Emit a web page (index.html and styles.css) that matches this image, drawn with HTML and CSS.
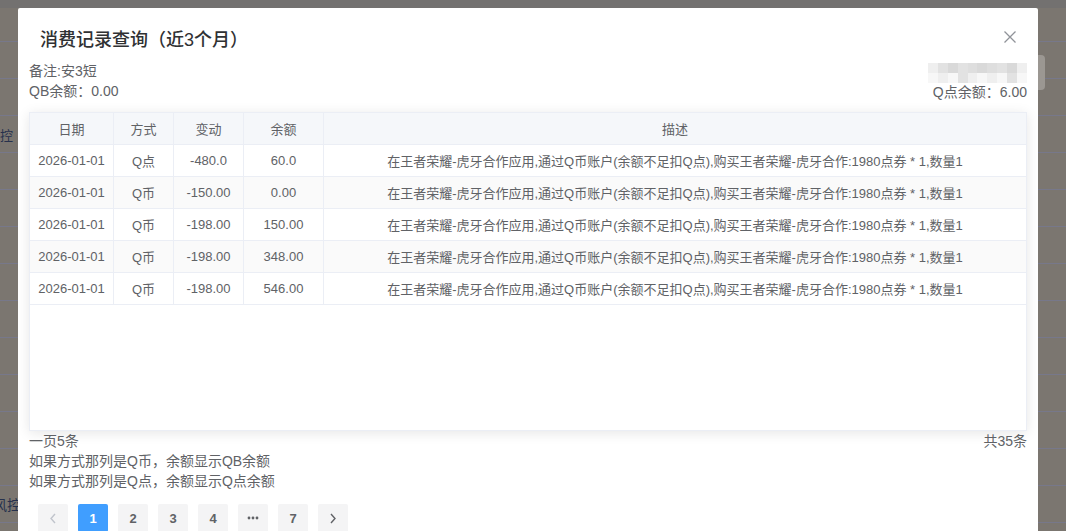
FILE: index.html
```html
<!DOCTYPE html>
<html lang="zh">
<head>
<meta charset="utf-8">
<title>消费记录查询</title>
<link rel="stylesheet" href="styles.css">
</head>
<body>
<div class="page">
  <div class="bg">
    <div class="bg-strip"></div>
    <div class="bg-rows">
      <div class="bg-row"></div>
      <div class="bg-row"></div>
      <div class="bg-row"></div>
      <div class="bg-row"><span class="bg-text t1">控</span></div>
      <div class="bg-row"></div>
      <div class="bg-row"></div>
      <div class="bg-row"></div>
      <div class="bg-row"></div>
      <div class="bg-row"></div>
      <div class="bg-row"></div>
      <div class="bg-row"></div>
      <div class="bg-row"></div>
      <div class="bg-row"></div>
      <div class="bg-row"><span class="bg-text t2">风控</span></div>
      <div class="bg-row"></div>
    </div>
  </div>
  <div class="side-tab"></div>

  <div class="dialog">
    <div class="dialog-header">
      <span class="dialog-title">消费记录查询（近3个月）</span>
      <svg class="close" width="12" height="12" viewBox="0 0 12 12"><path d="M0.5 0.5 L11.5 11.5 M11.5 0.5 L0.5 11.5" stroke="#909399" stroke-width="1.3" fill="none"/></svg>
    </div>
    <div class="dialog-body">
      <div class="info">
        <div class="info-left">
          <div class="line">备注:安3短</div>
          <div class="line">QB余额：0.00</div>
        </div>
        <div class="info-right">
          <div class="mosaic">
            <i class="c a"></i><i class="c b"></i><i class="c c2"></i><i class="c b"></i><i class="c d"></i><i class="c c2"></i><i class="c d"></i><i class="c b"></i><i class="c c2"></i><i class="c a"></i>
            <i class="c e"></i><i class="c a"></i><i class="c e"></i><i class="c b"></i><i class="c a"></i><i class="c e"></i><i class="c a"></i><i class="c e"></i><i class="c b"></i><i class="c e"></i>
          </div>
          <div class="line">Q点余额：6.00</div>
        </div>
      </div>

      <div class="table">
        <div class="tr th">
          <div class="td w1">日期</div>
          <div class="td w2">方式</div>
          <div class="td w3">变动</div>
          <div class="td w4">余额</div>
          <div class="td w5">描述</div>
        </div>
        <div class="tr">
          <div class="td w1">2026-01-01</div>
          <div class="td w2">Q点</div>
          <div class="td w3">-480.0</div>
          <div class="td w4">60.0</div>
          <div class="td w5">在王者荣耀-虎牙合作应用,通过Q币账户(余额不足扣Q点),购买王者荣耀-虎牙合作:1980点券 * 1,数量1</div>
        </div>
        <div class="tr striped">
          <div class="td w1">2026-01-01</div>
          <div class="td w2">Q币</div>
          <div class="td w3">-150.00</div>
          <div class="td w4">0.00</div>
          <div class="td w5">在王者荣耀-虎牙合作应用,通过Q币账户(余额不足扣Q点),购买王者荣耀-虎牙合作:1980点券 * 1,数量1</div>
        </div>
        <div class="tr">
          <div class="td w1">2026-01-01</div>
          <div class="td w2">Q币</div>
          <div class="td w3">-198.00</div>
          <div class="td w4">150.00</div>
          <div class="td w5">在王者荣耀-虎牙合作应用,通过Q币账户(余额不足扣Q点),购买王者荣耀-虎牙合作:1980点券 * 1,数量1</div>
        </div>
        <div class="tr striped">
          <div class="td w1">2026-01-01</div>
          <div class="td w2">Q币</div>
          <div class="td w3">-198.00</div>
          <div class="td w4">348.00</div>
          <div class="td w5">在王者荣耀-虎牙合作应用,通过Q币账户(余额不足扣Q点),购买王者荣耀-虎牙合作:1980点券 * 1,数量1</div>
        </div>
        <div class="tr">
          <div class="td w1">2026-01-01</div>
          <div class="td w2">Q币</div>
          <div class="td w3">-198.00</div>
          <div class="td w4">546.00</div>
          <div class="td w5">在王者荣耀-虎牙合作应用,通过Q币账户(余额不足扣Q点),购买王者荣耀-虎牙合作:1980点券 * 1,数量1</div>
        </div>
      </div>

      <div class="foot">
        <div class="line">一页5条</div>
        <div class="line">共35条</div>
      </div>
      <div class="line">如果方式那列是Q币，余额显示QB余额</div>
      <div class="line">如果方式那列是Q点，余额显示Q点余额</div>

      <div class="pager">
        <button class="pbtn disabled"><svg width="8" height="11" viewBox="0 0 8 11"><path d="M6 1 L2 5.5 L6 10" stroke="#c0c4cc" stroke-width="1.4" fill="none"/></svg></button>
        <button class="pbtn active">1</button>
        <button class="pbtn">2</button>
        <button class="pbtn">3</button>
        <button class="pbtn">4</button>
        <button class="pbtn more"><svg width="12" height="4" viewBox="0 0 12 4"><circle cx="2" cy="2" r="1.4" fill="#606266"/><circle cx="6" cy="2" r="1.4" fill="#606266"/><circle cx="10" cy="2" r="1.4" fill="#606266"/></svg></button>
        <button class="pbtn">7</button>
        <button class="pbtn"><svg width="8" height="11" viewBox="0 0 8 11"><path d="M2 1 L6 5.5 L2 10" stroke="#606266" stroke-width="1.4" fill="none"/></svg></button>
      </div>
    </div>
  </div>
</div>
</body>
</html>
```

FILE: styles.css
```css
* { box-sizing: border-box; }
html, body {
  margin: 0;
  padding: 0;
  width: 1066px;
  height: 531px;
  overflow: hidden;
}
body {
  font-family: "Liberation Sans", "Noto Sans CJK SC", sans-serif;
  color: #606266;
}
.page {
  position: relative;
  width: 1066px;
  height: 531px;
  overflow: hidden;
  background: #7b7670;
}
.bg {
  position: absolute;
  left: 0;
  top: 0;
  width: 1066px;
  height: 531px;
}
.bg-strip {
  height: 8px;
  background: #737170;
}
.bg-rows {
  margin-top: -3px;
}
.bg-row {
  height: 37px;
  border-bottom: 1px solid #77788a;
  display: flex;
  align-items: center;
  font-size: 14px;
  color: #26314d;
}
.bg-text { white-space: nowrap; }
.t1 { margin-left: 0; font-size: 13px; }
.t2 { margin-left: -7px; }

.side-tab {
  position: absolute;
  left: 1037px;
  top: 55px;
  width: 8px;
  height: 35px;
  background: #9b9792;
  border-radius: 0 4px 4px 0;
}

.dialog {
  position: absolute;
  left: 18px;
  top: 8px;
  width: 1020px;
  height: 560px;
  background: #fff;
  border-radius: 2px;
}
.dialog-header {
  display: flex;
  justify-content: space-between;
  align-items: center;
  padding: 20px 22px 9px 22px;
  height: 53px;
}
.dialog-title {
  font-size: 18px;
  line-height: 24px;
  color: #303133;
  font-weight: 500;
}
.close {
  margin-top: -7px;
}
.dialog-body {
  padding: 0 11px;
}
.line {
  font-size: 14px;
  line-height: 20px;
  height: 20px;
  color: #606266;
  white-space: nowrap;
}
.info {
  display: flex;
  justify-content: space-between;
  height: 40px;
}
.info-right {
  display: flex;
  flex-direction: column;
  align-items: flex-end;
}
.mosaic {
  margin-top: 2px;
  width: 99px;
  height: 20px;
  display: grid;
  grid-template-columns: repeat(10, 1fr);
  grid-template-rows: 10px 10px;
  margin-bottom: -1px;
}
.mosaic .c { display: block; }
.mosaic .a { background: #efefef; }
.mosaic .b { background: #e2e2e2; }
.mosaic .c2 { background: #d9d9d9; }
.mosaic .d { background: #dedede; }
.mosaic .e { background: #f7f7f7; }

.table {
  margin-top: 11px;
  height: 319px;
  border: 1px solid #ebeef5;
  box-shadow: 0 2px 12px rgba(0, 0, 0, 0.1);
  background: #fff;
}
.tr {
  display: flex;
  height: 32px;
  border-bottom: 1px solid #ebeef5;
}
.th {
  background: #f5f7fa;
}
.striped {
  background: #fafafa;
}
.td {
  display: flex;
  align-items: center;
  justify-content: center;
  font-size: 13px;
  color: #606266;
  border-right: 1px solid #ebeef5;
  white-space: nowrap;
}
.w1 { width: 84px; }
.w2 { width: 60px; }
.w3 { width: 70px; }
.w4 { width: 80px; }
.w5 { flex: 1; border-right: none; }

.foot {
  display: flex;
  justify-content: space-between;
}
.pager {
  display: flex;
  margin-top: 13px;
  padding-left: 9px;
  gap: 10px;
}
.pbtn {
  width: 30px;
  height: 28px;
  margin: 0;
  border: none;
  border-radius: 2px;
  background: #f4f4f5;
  color: #606266;
  font-family: "Liberation Sans", sans-serif;
  font-size: 13px;
  font-weight: 700;
  display: flex;
  align-items: center;
  justify-content: center;
  padding: 0;
}
.pbtn.active {
  background: #409eff;
  color: #fff;
}
```
